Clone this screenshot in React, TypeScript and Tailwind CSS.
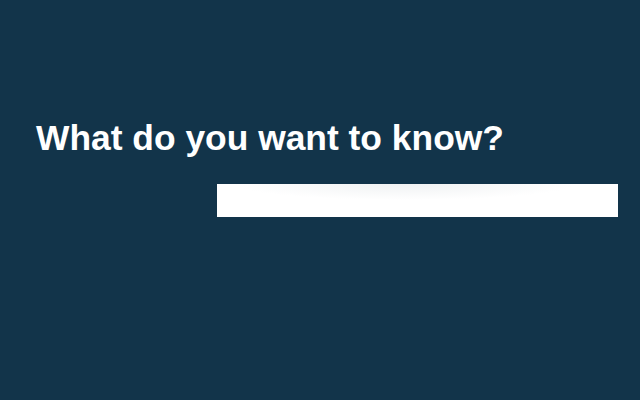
export default function App() {
  return (
    <div className="w-[640px] h-[400px] bg-[#12344a] pt-[114px] pl-[36px] font-['Liberation_Sans',Arial,sans-serif]">
      <h1 className="text-white font-bold text-[35.4px] leading-[48px]">What do you want to know?</h1>
      <div className="mt-[22px] ml-[181px] w-[401px] h-[33px] bg-white bg-[radial-gradient(ellipse_170px_16px_at_47%_0%,#f0f2f3,#ffffff)]" />
    </div>
  );
}
